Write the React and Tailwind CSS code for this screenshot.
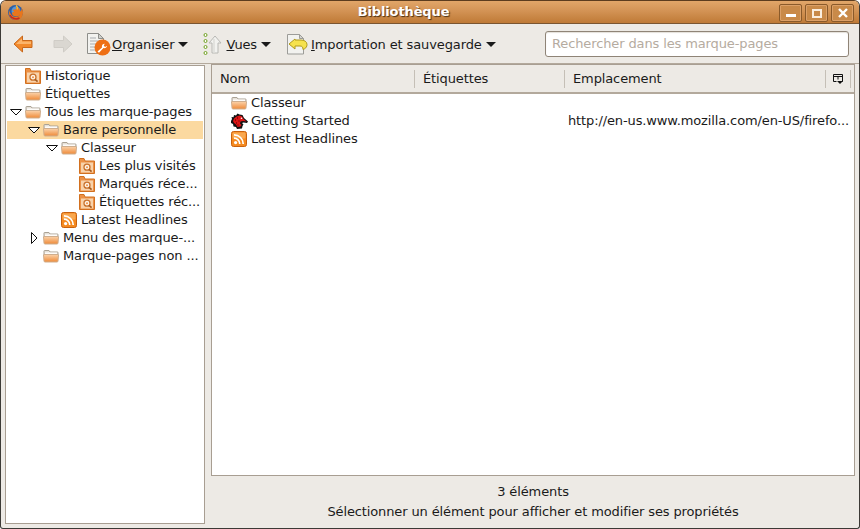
const FONT = "font-['DejaVu_Sans',sans-serif]";

function Folder() {
  return (
    <svg width="16" height="16" viewBox="0 0 16 16" className="shrink-0">
      <defs>
        <linearGradient id="folderBody" x1="0" y1="0" x2="0" y2="1">
          <stop offset="0" stopColor="#fbd3ab" />
          <stop offset="1" stopColor="#ef8a38" />
        </linearGradient>
      </defs>
      <path d="M1.500 2.500h4.500l1 1.500h7.500a.5.5 0 0 1 .5.500V8h-14V3a.5.5 0 0 1 .5-.500z" fill="#e6e1d8" stroke="#aaa295" strokeWidth="1" />
      <rect x="2" y="4.500" width="12" height="2" fill="#fdfcfa" />
      <path d="M1 6.500h14a.5.5 0 0 1 .5.500l-.5 6a1 1 0 0 1-1 1H2a1 1 0 0 1-1-1L.5 7a.5.5 0 0 1 .5-.500z" fill="url(#folderBody)" stroke="#cfae8e" strokeWidth="1" />
    </svg>
  );
}

function SmartFolder() {
  return (
    <svg width="16" height="16" viewBox="0 0 16 16" className="shrink-0">
      <path d="M1 .5h4l1 2.500h9.500v12.500H.5V.5z" fill="#ec9146" stroke="#d2701f" strokeWidth="1" />
      <rect x="2" y="4.500" width="12" height="10" fill="#f8d3ab" />
      <circle cx="8" cy="9.200" r="3" fill="#fdf3e7" stroke="#c9702a" strokeWidth="1.300" />
      <circle cx="8" cy="9.200" r="1" fill="#ec9146" />
      <path d="M10 11.300l2.600 2.400" stroke="#a55a1e" strokeWidth="1.600" />
    </svg>
  );
}

function Rss() {
  return (
    <svg width="16" height="16" viewBox="0 0 16 16" className="shrink-0">
      <rect x=".5" y=".5" width="15" height="15" rx="2" fill="#f58a20" stroke="#c9610e" />
      <rect x="1.500" y="1.500" width="13" height="6" rx="1" fill="#f9a850" />
      <circle cx="4.600" cy="11.600" r="1.600" fill="#fff" />
      <path d="M3 7.200a5.800 5.800 0 0 1 5.800 5.800" fill="none" stroke="#fff" strokeWidth="1.700" />
      <path d="M3 3.800a9.200 9.200 0 0 1 9.200 9.200" fill="none" stroke="#fff" strokeWidth="1.700" />
    </svg>
  );
}

function Dino() {
  return (
    <svg width="17" height="17" viewBox="0 0 17 17" className="shrink-0 -mr-[1px]">
      <path d="M0 8l1-2-.5-2 2 .2L3 2l2 .5L6.500.5 8.500 1.500l3 .5L13 5l4 3.500-1 1.500-3.500-.5-1.500.5 1.500 1.500-1 1.500-.5 2.500-5 .5-1-2-2.500-.5-.5-2.500L0 10z" fill="#111" />
      <path d="M2 8l1-2.500L5.500 3.500 8.500 2.500l2.500 1 1.500 2.500 3 2.500-3.500-.5-2.500.5-.5 2 1.500 1.500-1 1.500-3 .5-1.500-2.500-2-1.500z" fill="#dc1414" />
      <circle cx="10.500" cy="5.200" r=".8" fill="#fff" />
      <path d="M4 7h1M6 5h1M5 10h1M7.500 8h1M6.500 12h1" stroke="#4a0000" strokeWidth="1" />
    </svg>
  );
}

function Firefox() {
  return (
    <svg width="17" height="17" viewBox="0 0 17 17" className="shrink-0">
      <circle cx="8.500" cy="8.500" r="7.500" fill="#2b5fa8" />
      <circle cx="9" cy="7" r="4.500" fill="#5a97d6" />
      <path d="M2 6C1 11 4 16 9 16c4 0 7-3 7-7.500 0-2-.8-3.500-1.500-4.500.3 2-.5 3-1.500 3.500.3-2-1-4.500-4.500-5.500 1 1.500 1 2.800 0 3.500-1-.3-2.500 0-3 1 1 .3 1.500 1 1.500 1.500-1.500 0-2 .5-2 1.500.3 1.800 2 3 4 3 2.500 0 4-1.500 4.300-2.500C12.500 12 10.500 13.500 8 13 5 12.500 3 9.500 2 6z" fill="#e8761c" />
      <path d="M3 11c1.500 3.500 6 5 9.500 3" fill="none" stroke="#c8281c" strokeWidth="1.500" />
      <path d="M9 1.500c1.200 1 1.800 2.500 1 4" fill="none" stroke="#f7c23c" strokeWidth="1.200" />
    </svg>
  );
}

function Caret() {
  return <span className="ml-[4px] w-0 h-0 border-x-[5px] border-x-transparent border-t-[5px] border-t-[#1a1a1a] shrink-0" />;
}

function Twisty({ state }) {
  if (state === 'open') {
    return (
      <svg width="18" height="18" viewBox="0 0 18 18" className="shrink-0">
        <path d="M3.500 6.500h11L9 12z" fill="#fff" stroke="#111" strokeWidth="1" />
      </svg>
    );
  }
  if (state === 'closed') {
    return (
      <svg width="18" height="18" viewBox="0 0 18 18" className="shrink-0">
        <path d="M6.500 3.500v11L12 9z" fill="#fff" stroke="#111" strokeWidth="1" />
      </svg>
    );
  }
  return <span className="w-[18px] shrink-0" />;
}

function OrganizeIcon() {
  return (
    <svg width="24" height="23" viewBox="0 0 24 23" className="shrink-0">
      <path d="M.5.5h11l5 5v15H.5z" fill="#f2f2ef" stroke="#8e8e8a" />
      <path d="M11.500.5v5h5z" fill="#cfd0cc" stroke="#8e8e8a" />
      <path d="M3 5h6M3 8h10M3 11h10M3 14h7M3 17h6" stroke="#a9acb0" strokeWidth="1" />
      <circle cx="15.500" cy="14.500" r="8" fill="#ee6f14" />
      <path d="M10.500 18.500l1.500 1.300 4.500-4.800c1.600.5 3.300-.2 3.600-2.200l-2 1.100-1.300-1.100.9-2c-2 0-3.300 1.700-2.700 3.600z" fill="#fff" />
    </svg>
  );
}

function ViewsIcon() {
  return (
    <svg width="20" height="23" viewBox="0 0 20 23" className="shrink-0">
      {[2, 8, 14, 20].map((y) => (
        <circle key={y} cx="2.500" cy={y} r="1.500" fill="#fff" stroke="#6fa020" strokeWidth="1" />
      ))}
      <path d="M12 3l6 7h-3v10h-6V10H6z" fill="#f2f2ef" stroke="#b8b8b4" strokeWidth="1" />
      <path d="M11 6v14" stroke="#dcdcd8" strokeWidth="1.500" />
    </svg>
  );
}

function ImportIcon() {
  return (
    <svg width="22" height="21" viewBox="0 0 22 21" className="shrink-0">
      <path d="M1.500.5h12l4 4V20h-16z" fill="#f2f2ef" stroke="#9c9c98" />
      <path d="M13.500.5v4h4z" fill="#d4d4d0" stroke="#9c9c98" />
      <path d="M9 5L3 10l6 5v-3h5c2 0 3 1 3 3.500 0 0 4-1 4-5 0-3-3-4.500-6-4.500H9z" fill="#f6e24e" stroke="#b09a1c" strokeWidth="1" />
    </svg>
  );
}

function BackArrow() {
  return (
    <svg width="20" height="18" viewBox="0 0 20 18" className="shrink-0">
      <path d="M9.500 1L1 9l8.500 8v-4.500H19v-7H9.500z" fill="#f28a2c" stroke="#c8681c" strokeWidth="1" strokeLinejoin="round" />
      <path d="M9 3.500L3 9h15V6.500H9z" fill="#fbb56c" />
    </svg>
  );
}

function ForwardArrow() {
  return (
    <svg width="20" height="18" viewBox="0 0 20 18" className="shrink-0">
      <path d="M10.500 1L19 9l-8.500 8v-4.500H1v-7h9.500z" fill="#dad7d1" stroke="#cfccc6" strokeWidth="1" strokeLinejoin="round" />
    </svg>
  );
}

function ColumnPicker() {
  return (
    <svg width="11" height="11" viewBox="0 0 11 11">
      <path d="M.5.500h9v7H6M.5.500v7h3M.5 2.500h9M5 2.500v3" fill="none" stroke="#111" strokeWidth="1" />
      <path d="M4 7h6l-3 3z" fill="#111" />
    </svg>
  );
}

function WinButton({ children }) {
  return (
    <div className="w-[23px] h-[18px] flex items-center justify-center rounded-[2px] border border-[#8a5a2a] shadow-[inset_0_0_0_1px_#dca067] bg-[#c98a49]">
      {children}
    </div>
  );
}

const treeRows = [
  { label: 'Historique', icon: 'smart', indent: 'pl-0' },
  { label: 'Étiquettes', icon: 'folder', indent: 'pl-0' },
  { label: 'Tous les marque-pages', icon: 'folder', indent: 'pl-0', twisty: 'open' },
  { label: 'Barre personnelle', icon: 'folder', indent: 'pl-[18px]', twisty: 'open', selected: true },
  { label: 'Classeur', icon: 'folder', indent: 'pl-[36px]', twisty: 'open' },
  { label: 'Les plus visités', icon: 'smart', indent: 'pl-[54px]' },
  { label: 'Marqués réce...', icon: 'smart', indent: 'pl-[54px]' },
  { label: 'Étiquettes réc...', icon: 'smart', indent: 'pl-[54px]' },
  { label: 'Latest Headlines', icon: 'rss', indent: 'pl-[36px]' },
  { label: 'Menu des marque-...', icon: 'folder', indent: 'pl-[18px]', twisty: 'closed' },
  { label: 'Marque-pages non ...', icon: 'folder', indent: 'pl-[18px]' },
];

const listRows = [
  { name: 'Classeur', icon: 'folder', url: '' },
  { name: 'Getting Started', icon: 'dino', url: 'http://en-us.www.mozilla.com/en-US/firefo...' },
  { name: 'Latest Headlines', icon: 'rss', url: '' },
];

function RowIcon({ type }) {
  if (type === 'smart') return <SmartFolder />;
  if (type === 'rss') return <Rss />;
  if (type === 'dino') return <Dino />;
  return <Folder />;
}

export default function App() {
  return (
    <div className={`${FONT} w-[860px] h-[529px] flex flex-col bg-white text-[13px] leading-[18px] tracking-[-0.12px] text-[#1a1a1a] overflow-hidden`}>
      <div className="h-full flex flex-col rounded-t-[6px] rounded-b-[3px] border border-[#3c3a36] border-t-[#5c3c1e] bg-[#edeae5] overflow-hidden">
        {/* title bar */}
        <div className="h-[23px] shrink-0 flex items-center pl-[6px] pr-[4px] border-b border-[#7a5530] bg-[linear-gradient(#e2a669,#d39355_45%,#bf7a36_100%)]">
          <Firefox />
          <div className="flex-1 pl-[4px] text-center font-bold text-white [text-shadow:1px_1px_1px_#4a2f14]">Bibliothèque</div>
          <div className="flex gap-[3px] mt-[2px] mr-[1px]">
            <WinButton><span className="w-[10px] h-[3px] mt-[5px] bg-white" /></WinButton>
            <WinButton><span className="w-[10px] h-[9px] border-2 border-[#fbeede]" /></WinButton>
            <WinButton>
              <svg width="10" height="10" viewBox="0 0 10 10"><path d="M1 1l8 8M9 1l-8 8" stroke="#fff" strokeWidth="2.400" /></svg>
            </WinButton>
          </div>
        </div>

        {/* toolbar */}
        <div className="h-[40px] shrink-0 flex items-center pl-[12px] pr-[10px] border-b border-[#b3a99c]">
          <div className="mt-[1px]"><BackArrow /></div>
          <div className="ml-[20px] mt-[1px]"><ForwardArrow /></div>
          <div className="ml-[14px] mt-[2px] flex items-center">
            <OrganizeIcon />
            <span className="ml-[1px]"><u>O</u>rganiser</span>
            <Caret />
          </div>
          <div className="ml-[15px] mt-[2px] flex items-center">
            <ViewsIcon />
            <span className="ml-[3px]"><u>V</u>ues</span>
            <Caret />
          </div>
          <div className="ml-[15px] mt-[2px] flex items-center">
            <ImportIcon />
            <span className="ml-[3px]"><u>I</u>mportation et sauvegarde</span>
            <Caret />
          </div>
          <div className="ml-auto w-[304px] h-[26px] flex items-center pl-[6px] rounded-[3px] border border-[#8f8477] bg-white text-[#b5aba0] shadow-[inset_0_1px_1px_#e4e0da]">
            Rechercher dans les marque-pages
          </div>
        </div>

        {/* panes */}
        <div className="flex-1 min-h-0 flex">
          <div className="ml-[4px] mt-[1px] mb-[4px] w-[200px] shrink-0 border border-[#a89e92] bg-white p-[1px]">
            {treeRows.map((row) => (
              <div key={row.label} className={`h-[18px] flex items-center whitespace-nowrap ${row.indent} ${row.selected ? 'bg-[#fbd9a0]' : ''}`}>
                <Twisty state={row.twisty} />
                <RowIcon type={row.icon} />
                <span className="ml-[4px]">{row.label}</span>
              </div>
            ))}
          </div>

          {/* vertical splitter */}
          <div className="w-[6px] shrink-0 flex items-center justify-center">
            <div className="w-[4px] h-[48px] bg-[radial-gradient(#a8a298_0.5px,transparent_0.6px)] bg-[length:2px_2px]" />
          </div>

          <div className="flex-1 min-w-0 flex flex-col mr-[4px]">
            <div className="h-[412px] shrink-0 flex flex-col border border-[#a89e92] bg-white">
              <div className="h-[29px] shrink-0 flex items-start pt-[5px] bg-[#edeae5] border-b-2 border-[#b3a99c]">
                <div className="w-[203px] h-[18px] pl-[8px] flex items-center border-r border-[#c5bfb6]">Nom</div>
                <div className="w-[150px] h-[18px] pl-[8px] flex items-center border-r border-[#c5bfb6]">Étiquettes</div>
                <div className="w-[261px] h-[18px] pl-[8px] flex items-center border-r border-[#c5bfb6]">Emplacement</div>
                <div className="w-[25px] h-[18px] flex items-center justify-center border-r border-[#c5bfb6]"><ColumnPicker /></div>
              </div>
              {listRows.map((row) => (
                <div key={row.name} className="h-[18px] flex items-center whitespace-nowrap">
                  <div className="w-[356px] pl-[19px] flex items-center">
                    <RowIcon type={row.icon} />
                    <span className="ml-[4px]">{row.name}</span>
                  </div>
                  <span>{row.url}</span>
                </div>
              ))}
            </div>

            {/* status */}
            <div className="flex-1 flex flex-col items-center">
              <div className="w-[47px] h-[4px] mt-[1px] bg-[radial-gradient(#b5afa5_0.5px,transparent_0.6px)] bg-[length:2px_2px]" />
              <div className="mt-[1px] h-[20px] leading-[20px]">3 éléments</div>
              <div className="h-[20px] leading-[20px]">Sélectionner un élément pour afficher et modifier ses propriétés</div>
            </div>
          </div>
        </div>
      </div>
    </div>
  );
}
